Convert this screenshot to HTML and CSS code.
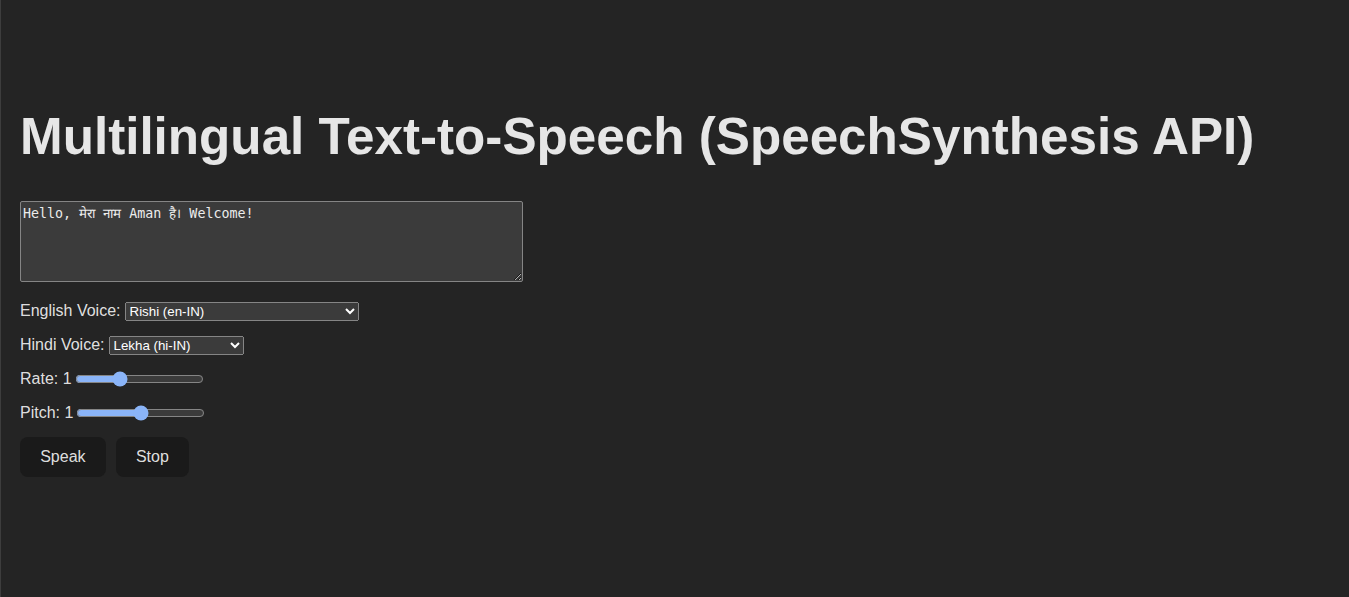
FILE: index.html
```html
<!DOCTYPE html>
<html lang="en">
<head>
<meta charset="utf-8">
<title>Multilingual Text-to-Speech</title>
<link rel="stylesheet" href="styles.css">
</head>
<body>
<main class="app">
  <h1 class="title">Multilingual Text-to-Speech (SpeechSynthesis API)</h1>
  <div class="controls">
    <textarea class="text-input">Hello, मेरा नाम Aman है। Welcome!</textarea>
    <div class="row">
      <label>English Voice:</label>
      <select class="voice voice-en"><option>Rishi (en-IN)</option></select>
    </div>
    <div class="row">
      <label>Hindi Voice:</label>
      <select class="voice voice-hi"><option>Lekha (hi-IN)</option></select>
    </div>
    <div class="row">
      <label>Rate: 1</label>
      <input class="slider" type="range" min="0.5" max="2" step="0.1" value="1">
    </div>
    <div class="row">
      <label>Pitch: 1</label>
      <input class="slider" type="range" min="0" max="2" step="0.1" value="1">
    </div>
    <div class="buttons">
      <button class="btn">Speak</button>
      <button class="btn">Stop</button>
    </div>
  </div>
</main>
</body>
</html>
```

FILE: styles.css
```css
html {
  color-scheme: dark;
  background: #242424;
}
body {
  margin: 0;
  min-height: 100vh;
  box-sizing: border-box;
  border-left: 1px solid #3d3d3d;
  background: #242424;
  color: rgba(255, 255, 255, 0.87);
  font-family: "Liberation Sans", Arial, sans-serif;
  font-size: 16px;
}
.app {
  padding: 109px 19px 20px 19px;
}
.title {
  margin: 0 0 36px 0;
  font-size: 51.2px;
  line-height: 1.1;
  font-weight: bold;
  color: #e6e6e6;
}
.controls {
  display: flex;
  flex-direction: column;
  align-items: flex-start;
  gap: 14px;
}
.text-input {
  display: block;
  box-sizing: border-box;
  width: 503px;
  height: 81px;
  margin: 0 0 5px 0;
  padding: 2px;
  background: #3b3b3b;
  color: #ececec;
  border: 1px solid #858585;
  border-radius: 2px;
  font-family: "DejaVu Sans Mono", monospace;
  font-size: 13.33px;
  resize: both;
}
.row {
  display: flex;
  align-items: center;
  gap: 4px;
  height: 20px;
}
.voice {
  height: 19px;
  font-family: "Liberation Sans", Arial, sans-serif;
  font-size: 13.33px;
}
.voice-en { width: 234px; }
.voice-hi { width: 135px; }
.slider {
  width: 129px;
  margin: 2px 2px 2px -1px;
  accent-color: #8ab4f8;
}
.buttons {
  display: flex;
  gap: 10px;
}
.btn {
  padding: 9.6px 19.2px;
  border: 1px solid transparent;
  border-radius: 8px;
  background: #1a1a1a;
  color: rgba(255, 255, 255, 0.87);
  font-family: "Liberation Sans", Arial, sans-serif;
  font-size: 16px;
  font-weight: 500;
  cursor: pointer;
}
```
